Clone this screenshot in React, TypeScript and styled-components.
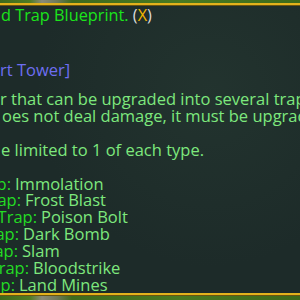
import { FC } from 'react'
import styled, { createGlobalStyle } from 'styled-components'

const GlobalStyle = createGlobalStyle`
  html, body {
    margin: 0;
    padding: 0;
    background: #1e2c2a;
  }
`

interface Trap {
  prefix: string
  name: string
  cut: number
}

// cut = visible width of the prefix column, the rest is off the left edge
const traps: Trap[] = [
  { prefix: 'Trap:', name: 'Immolation', cut: 11 },
  { prefix: 'Trap:', name: 'Frost Blast', cut: 21 },
  { prefix: 'Trap:', name: 'Poison Bolt', cut: 37 },
  { prefix: 'Trap:', name: 'Dark Bomb', cut: 19 },
  { prefix: 'Trap:', name: 'Slam', cut: 18 },
  { prefix: 'Trap:', name: 'Bloodstrike', cut: 29 },
  { prefix: 'Trap:', name: 'Land Mines', cut: 15 }
]

const TooltipComponent: FC<{ className?: string }> = ({ className }) => (
  <div className={className}>
    <GlobalStyle />
    <Grass />
    <GoldRule />
    <Panel>
      <Title>
        d Trap Blueprint. <Paren>(</Paren>
        <Hotkey>X</Hotkey>
        <Paren>)</Paren>
      </Title>
      <Divider />
      <Tower>rt Tower]</Tower>
      <Body>
        <Line $shift={0}>r that can be upgraded into several traps</Line>
        <Line $shift={2}>oes not deal damage, it must be upgrad</Line>
        <Gap />
        <Line $shift={1}>e limited to 1 of each type.</Line>
        <Gap />
        {traps.map((t) => (
          <TrapRow key={t.name}>
            <Prefix $cut={t.cut}>
              <span>{t.prefix}</span>
            </Prefix>
            <Name>{t.name}</Name>
          </TrapRow>
        ))}
      </Body>
    </Panel>
    <GoldRule />
    <Grass $tall />
  </div>
)

TooltipComponent.displayName = 'Tooltip'

const Grass = styled.div<{ $tall?: boolean }>`
  height: ${(p) => (p.$tall ? 4 : 3)}px;
  flex-shrink: 0;
  background: linear-gradient(
    90deg,
    #3f6a1c 0%,
    #4f7d24 10%,
    #8a8a78 14%,
    #6f7a5a 19%,
    #3e6b1d 24%,
    #4a7a22 60%,
    #3d6a1b 100%
  );
`

const GoldRule = styled.div`
  height: 2px;
  flex-shrink: 0;
  background: #e3b21c;
  border-bottom: 1px solid #6b5410;
`

const Panel = styled.div`
  flex: 1;
  display: flex;
  flex-direction: column;
  overflow: hidden;
  background:
    radial-gradient(circle at 70% 30%, rgba(40, 60, 52, 0.5), transparent 60%),
    #1d2b29;
`

const Title = styled.div`
  font-size: 16.3px;
  line-height: 17px;
  color: #1be51b;
  padding: 1px 0 0 1px;
  white-space: nowrap;
`

const Paren = styled.span`
  color: #dadada;
`

const Hotkey = styled.span`
  color: #f2b600;
`

const Divider = styled.div`
  height: 1px;
  background: #8e9593;
  margin-top: 29px;
`

const Tower = styled.div`
  line-height: 17px;
  color: #6e6ef0;
  margin-top: 8px;
  white-space: nowrap;
`

const Body = styled.div`
  display: flex;
  flex-direction: column;
  margin-top: 13px;
  line-height: 16.9px;
  color: #7de87d;
  white-space: nowrap;
`

const Line = styled.div<{ $shift: number }>`
  padding-left: ${(p) => p.$shift}px;
`

const Gap = styled.div`
  height: 16.9px;
`

const TrapRow = styled.div`
  display: flex;
  gap: 4px;
`

const Prefix = styled.span<{ $cut: number }>`
  display: flex;
  justify-content: flex-end;
  overflow: hidden;
  flex-shrink: 0;
  width: ${(p) => p.$cut}px;
  color: #24dc24;
`

const Name = styled.span`
  color: #7de87d;
`

const Tooltip = styled(TooltipComponent)`
  width: 300px;
  height: 300px;
  display: flex;
  flex-direction: column;
  overflow: hidden;
  font-family: 'Open Sans', sans-serif;
  font-size: 16.5px;
`

export default function App() {
  return <Tooltip />
}
